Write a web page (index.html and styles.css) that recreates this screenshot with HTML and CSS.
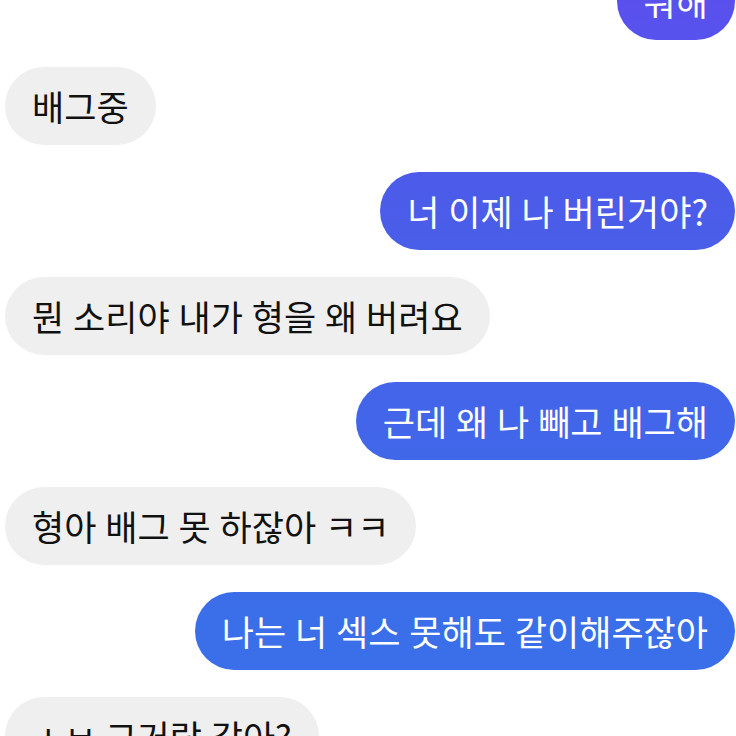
FILE: index.html
```html
<!DOCTYPE html>
<html>
<head>
    <title>Chat</title>
    <link rel="stylesheet" href="styles.css">
</head>
<body>
    <div class="chat">
        <div class="msg me"><span class="bubble">뭐해</span></div>
        <div class="msg"><span class="bubble">배그중</span></div>
        <div class="msg me"><span class="bubble">너 이제 나 버린거야?</span></div>
        <div class="msg"><span class="bubble">뭔 소리야 내가 형을 왜 버려요</span></div>
        <div class="msg me"><span class="bubble">근데 왜 나 빼고 배그해</span></div>
        <div class="msg"><span class="bubble">형아 배그 못 하잖아 ㅋㅋ</span></div>
        <div class="msg me"><span class="bubble">나는 너 섹스 못해도 같이해주잖아</span></div>
        <div class="msg"><span class="bubble">ㅅㅂ 그거랑 같아?</span></div>
    </div>
</body>
</html>
```

FILE: styles.css
```css
body {
    margin: 0;
    padding: 0;
    background: #fff;
    font-family: "Noto Sans CJK KR", "Noto Sans", sans-serif;
    overflow: hidden;
}
.chat {
    display: flex;
    flex-direction: column;
    gap: 27px;
    padding: 0 1px 0 5px;
    margin-top: -38px;
}
.msg {
    display: flex;
    justify-content: flex-start;
}
.msg.me {
    justify-content: flex-end;
}
.bubble {
    display: block;
    padding: 19px 27px;
    line-height: 40px;
    font-size: 35px;
    word-spacing: 1px;
    border-radius: 39px;
    background: #efefef;
    color: #111;
    white-space: nowrap;
}
.me .bubble {
    color: #fff;
    background: linear-gradient(to bottom, #5a50ee 0px, #4b5ce9 200px, #3a6fe9 640px) fixed;
}
```
